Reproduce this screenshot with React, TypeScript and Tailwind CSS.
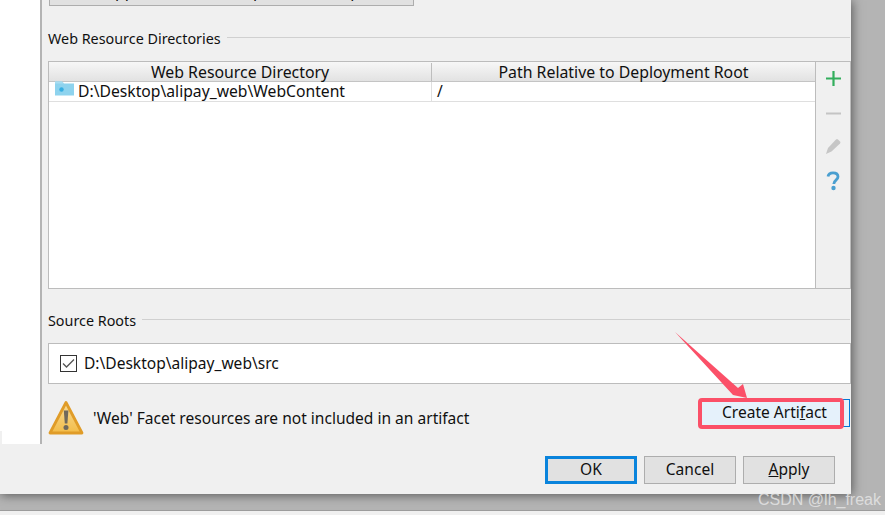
function Section({ title }: { title: string }) {
  return (
    <div className="flex items-center h-[22px] pr-[1px] text-[14.35px]">
      <span className="whitespace-nowrap pt-[2px]">{title}</span>
      <div className="flex-1 h-[1px] bg-[#d0d0d0] ml-[6px] -mt-[2px]" />
    </div>
  );
}

function FolderIcon() {
  return (
    <svg width="19" height="15" viewBox="0 0 19 15" className="shrink-0">
      <path d="M0 0.5h7l2 2h10v12H0z" fill="#8ed3ee" />
      <path d="M0 .5h7l2 2H0z" fill="#a9def2" />
      <circle cx="6.5" cy="8.5" r="2.2" fill="#35aee2" />
    </svg>
  );
}

function Warning() {
  return (
    <svg width="37" height="36" viewBox="0 0 37 36" className="shrink-0">
      <defs>
        <linearGradient id="w" x1="0" y1="0" x2="0" y2="1">
          <stop offset="0" stopColor="#f8dc98" />
          <stop offset="1" stopColor="#f3bc48" />
        </linearGradient>
      </defs>
      <path d="M18 2.5 L34 33 H2 Z" fill="url(#w)" stroke="#e09c28" strokeWidth="2.8" strokeLinejoin="round" />
      <path d="M15.8 10.5h4.6l-1 13h-2.6z" fill="#70695c" />
      <circle cx="18" cy="27.5" r="2.5" fill="#70695c" />
    </svg>
  );
}

export default function App() {
  return (
    <div
      className="relative w-[885px] h-[515px] overflow-hidden bg-[#f0f0f0] text-[15.55px] leading-[20px] text-[#101010] flex flex-col"
      style={{ fontFamily: '"Noto Sans", "Open Sans", sans-serif' }}
    >
      <div className="flex h-[511px] bg-[#b4b4b4] border-b border-[#9c9c9c]">
        <div className="w-[851px] h-[494px] flex flex-col bg-[#f0f0f0] shadow-[1px_1px_10px_#555555]">
          <div className="flex h-[444px]">
            <div className="w-[42px] bg-white border-r-2 border-[#b4b4b4] flex flex-col justify-end">
              <div className="w-[2px] h-[13px] bg-[#f0f0f0]" />
            </div>
            <div className="flex-1 flex flex-col pl-[6px]">
              <div className="ml-[1px] w-[365px] h-[6px] overflow-hidden bg-[#e1e1e1] border-x border-b border-[#adadad] flex items-end justify-center">
                <span className="whitespace-nowrap leading-[20px] text-[16px] mb-[4px]">Add Application Server specific descriptor...</span>
              </div>
              <div className="mt-[21px]"><Section title="Web Resource Directories" /></div>
              <div className="mt-[12px] flex h-[228px] bg-white border border-[#bcbcbc]">
                <div className="w-[767px] flex flex-col">
                  <div className="flex h-[20px] border-b border-[#c4c4c4] bg-gradient-to-b from-[#f7f7f7] to-[#e2e2e2] text-center text-[15.85px] leading-[18px] pt-[1px]">
                    <div className="w-[383px] border-r border-[#bdbdbd]">Web Resource Directory</div>
                    <div className="flex-1 border-r border-[#bdbdbd]">Path Relative to Deployment Root</div>
                  </div>
                  <div className="flex h-[20px] border-b border-[#dfdfdf] leading-[16px]">
                    <div className="w-[383px] border-r border-[#dfdfdf] pl-[6px] flex items-start gap-[4px] text-[15.7px]">
                      <div className="-mt-[1px]"><FolderIcon /></div>
                      <span className="whitespace-nowrap pt-[1px]">D:\Desktop\alipay_web\WebContent</span>
                    </div>
                    <div className="flex-1 pl-[5px] pt-[1px]">/</div>
                  </div>
                </div>
                <div className="flex-1 border-l border-[#bcbcbc] bg-[#f0f0f0] flex flex-col items-center pt-[8px] -ml-[1px]">
                  <svg width="17" height="17" viewBox="0 0 17 17"><path d="M8.5 1v15M1 8.5h15" stroke="#32ae5c" strokeWidth="2.2" /></svg>
                  <svg width="17" height="17" viewBox="0 0 17 17" className="mt-[18px]"><path d="M1 8.5h15" stroke="#c4c4c4" strokeWidth="2" /></svg>
                  <svg width="17" height="17" viewBox="0 0 17 17" className="mt-[15px]"><path d="M1 17l2-6L11 2.5a1.5 1.5 0 0 1 2 0l2 2a1.5 1.5 0 0 1 0 2L6.5 14.5z" fill="#c6c6c6" /></svg>
                  <svg width="14" height="20" viewBox="0 0 14 20" className="mt-[17px]">
                    <path d="M2 5.5C2.5 2.5 5 1.8 7 1.8c3 0 5 1.6 5 4 0 3.4-4.2 3.4-4.2 7.2" fill="none" stroke="#4a9fd0" strokeWidth="2.8" />
                    <circle cx="7.5" cy="17" r="2.2" fill="#4a9fd0" />
                  </svg>
                </div>
              </div>
              <div className="mt-[20px] -mb-[1px]"><Section title="Source Roots" /></div>
              <div className="mt-[13px] h-[41px] bg-white border border-[#bcbcbc] flex items-center pl-[11px] gap-[7px]">
                <div className="w-[17px] h-[17px] border border-[#333333] bg-white flex items-center justify-center">
                  <svg width="13" height="11" viewBox="0 0 13 11"><path d="M1 5.5l3.5 3.5L12 1.5" fill="none" stroke="#555555" strokeWidth="1.3" /></svg>
                </div>
                <span className="leading-[16px] pb-[2px]">D:\Desktop\alipay_web\src</span>
              </div>
              <div className="mt-[16px] flex items-center">
                <Warning />
                <span className="ml-[8px] whitespace-nowrap">'Web' Facet resources are not included in an artifact</span>
                <div className="ml-auto mr-[1px] w-[150px] h-[28px] -mt-[11px] bg-[#e5f1fb] border border-[#0078d7] flex items-center justify-center pr-[1px] pb-[2px] leading-[18px]">
                  <span>Create Arti<u>f</u>act</span>
                </div>
              </div>
            </div>
          </div>
          <div className="flex-1 flex justify-end items-start pt-[12px] pr-[16px] gap-[7px] leading-[18px]">
            <button className="w-[92px] h-[28px] bg-[#e1e1e1] border-[3px] border-[#0a84dc] pb-[2px]">OK</button>
            <button className="w-[92px] h-[28px] bg-[#e1e1e1] border border-[#adadad] pb-[2px]">Cancel</button>
            <button className="w-[92px] h-[28px] bg-[#e1e1e1] border border-[#adadad] pb-[2px]"><u>A</u>pply</button>
          </div>
        </div>
      </div>
      <div className="absolute left-[698px] top-[398px] w-[146px] h-[31px] border-[4px] border-[#fb5068] rounded-[4px]" />
      <svg className="absolute left-[670px] top-[325px]" width="90" height="80" viewBox="0 0 90 80">
        <path d="M5 7 L63 70 L77 73 L73 59 L68 63 Z" fill="#fb5068" />
      </svg>
      <div className="absolute right-[4px] bottom-[5px] text-[16px] text-[#e8e8e8]/80 whitespace-nowrap leading-[20px]" style={{ fontFamily: '"Liberation Sans", sans-serif' }}>CSDN @lh_freak</div>
    </div>
  );
}
